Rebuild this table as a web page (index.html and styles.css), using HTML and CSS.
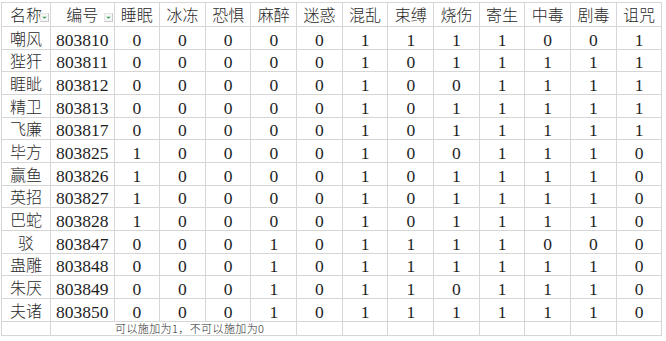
FILE: index.html
```html
<!DOCTYPE html>
<html lang="zh">
<head>
<meta charset="utf-8">
<title>异常状态表</title>
<link rel="stylesheet" href="styles.css">
</head>
<body>
<div class="sheet">
  <div class="c hd flt">名称<span class="drop"><svg viewBox="0 0 8 8" width="7" height="7"><path d="M1.5 3h5l-2.5 2.5z" fill="#2f9e4f"/></svg></span></div>
  <div class="c hd flt">编号<span class="drop"><svg viewBox="0 0 8 8" width="7" height="7"><path d="M1.5 3h5l-2.5 2.5z" fill="#2f9e4f"/></svg></span></div>
  <div class="c hd">睡眠</div><div class="c hd">冰冻</div><div class="c hd">恐惧</div><div class="c hd">麻醉</div><div class="c hd">迷惑</div><div class="c hd">混乱</div>
  <div class="c hd">束缚</div><div class="c hd">烧伤</div><div class="c hd">寄生</div><div class="c hd">中毒</div><div class="c hd">剧毒</div><div class="c hd">诅咒</div>

  <div class="c nm">嘲风</div><div class="c">803810</div><div class="c">0</div><div class="c">0</div><div class="c">0</div><div class="c">0</div><div class="c">0</div><div class="c">1</div><div class="c">1</div><div class="c">1</div><div class="c">1</div><div class="c">0</div><div class="c">0</div><div class="c">1</div>
  <div class="c nm">狴犴</div><div class="c">803811</div><div class="c">0</div><div class="c">0</div><div class="c">0</div><div class="c">0</div><div class="c">0</div><div class="c">1</div><div class="c">0</div><div class="c">1</div><div class="c">1</div><div class="c">1</div><div class="c">1</div><div class="c">1</div>
  <div class="c nm">睚眦</div><div class="c">803812</div><div class="c">0</div><div class="c">0</div><div class="c">0</div><div class="c">0</div><div class="c">0</div><div class="c">1</div><div class="c">0</div><div class="c">0</div><div class="c">1</div><div class="c">1</div><div class="c">1</div><div class="c">1</div>
  <div class="c nm">精卫</div><div class="c">803813</div><div class="c">0</div><div class="c">0</div><div class="c">0</div><div class="c">0</div><div class="c">0</div><div class="c">1</div><div class="c">0</div><div class="c">1</div><div class="c">1</div><div class="c">1</div><div class="c">1</div><div class="c">1</div>
  <div class="c nm">飞廉</div><div class="c">803817</div><div class="c">0</div><div class="c">0</div><div class="c">0</div><div class="c">0</div><div class="c">0</div><div class="c">1</div><div class="c">0</div><div class="c">1</div><div class="c">1</div><div class="c">1</div><div class="c">1</div><div class="c">1</div>
  <div class="c nm">毕方</div><div class="c">803825</div><div class="c">1</div><div class="c">0</div><div class="c">0</div><div class="c">0</div><div class="c">0</div><div class="c">1</div><div class="c">0</div><div class="c">0</div><div class="c">1</div><div class="c">1</div><div class="c">1</div><div class="c">0</div>
  <div class="c nm">赢鱼</div><div class="c">803826</div><div class="c">1</div><div class="c">0</div><div class="c">0</div><div class="c">0</div><div class="c">0</div><div class="c">1</div><div class="c">0</div><div class="c">1</div><div class="c">1</div><div class="c">1</div><div class="c">1</div><div class="c">0</div>
  <div class="c nm">英招</div><div class="c">803827</div><div class="c">1</div><div class="c">0</div><div class="c">0</div><div class="c">0</div><div class="c">0</div><div class="c">1</div><div class="c">0</div><div class="c">1</div><div class="c">1</div><div class="c">1</div><div class="c">1</div><div class="c">0</div>
  <div class="c nm">巴蛇</div><div class="c">803828</div><div class="c">1</div><div class="c">0</div><div class="c">0</div><div class="c">0</div><div class="c">0</div><div class="c">1</div><div class="c">0</div><div class="c">1</div><div class="c">1</div><div class="c">1</div><div class="c">1</div><div class="c">0</div>
  <div class="c nm">驳</div><div class="c">803847</div><div class="c">0</div><div class="c">0</div><div class="c">0</div><div class="c">1</div><div class="c">0</div><div class="c">1</div><div class="c">1</div><div class="c">1</div><div class="c">1</div><div class="c">0</div><div class="c">0</div><div class="c">0</div>
  <div class="c nm">蛊雕</div><div class="c">803848</div><div class="c">0</div><div class="c">0</div><div class="c">0</div><div class="c">1</div><div class="c">0</div><div class="c">1</div><div class="c">1</div><div class="c">1</div><div class="c">1</div><div class="c">1</div><div class="c">1</div><div class="c">0</div>
  <div class="c nm">朱厌</div><div class="c">803849</div><div class="c">0</div><div class="c">0</div><div class="c">0</div><div class="c">1</div><div class="c">0</div><div class="c">1</div><div class="c">1</div><div class="c">0</div><div class="c">1</div><div class="c">1</div><div class="c">1</div><div class="c">0</div>
  <div class="c nm">夫诸</div><div class="c">803850</div><div class="c">0</div><div class="c">0</div><div class="c">0</div><div class="c">1</div><div class="c">0</div><div class="c">1</div><div class="c">1</div><div class="c">1</div><div class="c">1</div><div class="c">1</div><div class="c">1</div><div class="c">0</div>

  <div class="c ft"></div><div class="c ft note">可以施加为1，不可以施加为0</div><div class="c ft"></div><div class="c ft"></div><div class="c ft"></div><div class="c ft"></div><div class="c ft"></div><div class="c ft"></div><div class="c ft"></div><div class="c ft"></div>
</div>
</body>
</html>
```
FILE: styles.css
```css
html, body {
  margin: 0;
  padding: 0;
  background: #ffffff;
}

.sheet {
  margin: 2px 0 0 1px;
  width: max-content;
  display: grid;
  grid-template-columns: 49px 63.5px repeat(12, 45.67px);
  grid-template-rows: 24px repeat(13, 22.67px) 14px;
  border-left: 1px solid #d6d6d6;
  border-top: 1px solid #d6d6d6;
  color: #1e1e1e;
}

.c {
  box-sizing: border-box;
  border-right: 1px solid #d6d6d6;
  border-bottom: 1px solid #d6d6d6;
  display: flex;
  align-items: flex-end;
  justify-content: center;
  white-space: nowrap;
  overflow: hidden;
  font-family: "Liberation Serif", "DejaVu Serif", serif;
  font-size: 17.5px;
  line-height: 15px;
  padding-bottom: 1px;
}

.hd,
.nm {
  font-family: "Noto Sans CJK SC", "Noto Sans CJK TC", sans-serif;
  font-weight: 300;
  font-size: 16px;
  line-height: 15px;
  color: #2a2a2a;
}

.hd {
  padding-bottom: 4px;
}

.nm {
  padding-bottom: 3px;
}

.flt {
  position: relative;
  overflow: visible;
}

.drop {
  position: absolute;
  right: 1px;
  bottom: 4px;
  box-sizing: border-box;
  width: 9px;
  height: 9px;
  background: #f6f6f6;
  border: 1px solid #c8c8c8;
  border-top-color: #e6e6e6;
  border-left-color: #e6e6e6;
  display: flex;
  align-items: center;
  justify-content: center;
}

.drop svg {
  display: block;
}

.ft {
  align-items: center;
  padding-bottom: 0;
}

.note {
  grid-column: span 5;
  justify-content: flex-start;
  padding-left: 64px;
  font-family: "Noto Sans CJK SC", sans-serif;
  font-weight: 300;
  font-size: 11px;
  letter-spacing: 0.4px;
  line-height: 12px;
  color: #2a2a2a;
}
```
